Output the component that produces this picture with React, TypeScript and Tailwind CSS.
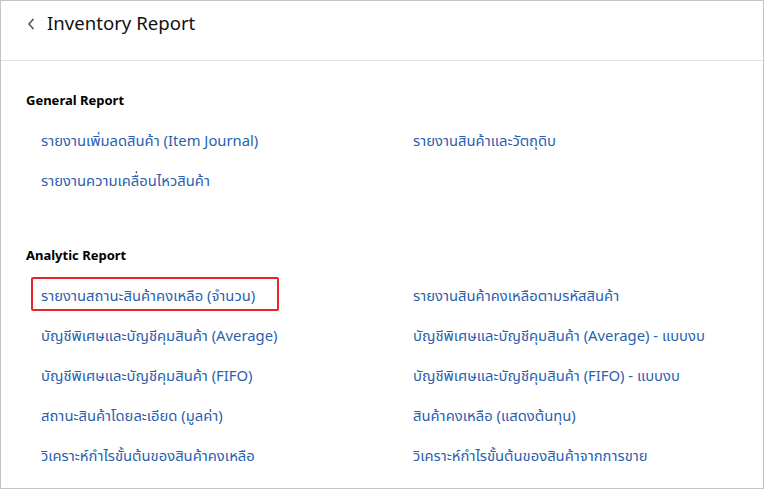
import React from "react";

const general: [string, string][] = [
  ["รายงานเพิ่มลดสินค้า (Item Journal)", "รายงานสินค้าและวัตถุดิบ"],
  ["รายงานความเคลื่อนไหวสินค้า", ""],
];

const analytic: [string, string][] = [
  ["รายงานสถานะสินค้าคงเหลือ (จำนวน)", "รายงานสินค้าคงเหลือตามรหัสสินค้า"],
  ["บัญชีพิเศษและบัญชีคุมสินค้า (Average)", "บัญชีพิเศษและบัญชีคุมสินค้า (Average) - แบบงบ"],
  ["บัญชีพิเศษและบัญชีคุมสินค้า (FIFO)", "บัญชีพิเศษและบัญชีคุมสินค้า (FIFO) - แบบงบ"],
  ["สถานะสินค้าโดยละเอียด (มูลค่า)", "สินค้าคงเหลือ (แสดงต้นทุน)"],
  ["วิเคราะห์กำไรขั้นต้นของสินค้าคงเหลือ", "วิเคราะห์กำไรขั้นต้นของสินค้าจากการขาย"],
];

function Link({ text, boxed }: { text: string; boxed?: boolean }) {
  if (!text) return <div />;
  return (
    <div className="relative h-[40px] flex items-center">
      <span className="text-[14.8px] text-[#2a5fae] leading-none">{text}</span>
      {boxed && (
        <span className="absolute left-[-10px] top-[2px] w-[248px] h-[34px] border-2 border-[#e8232a] rounded-[2px]" />
      )}
    </div>
  );
}

export default function App() {
  return (
    <div
      className="w-[765px] h-[490px] bg-white"
      style={{ fontFamily: '"Noto Sans", "Noto Sans Thai", "Leelawadee UI", sans-serif' }}
    >
      <div className="w-[764px] h-[489px] border border-[#c4c4c4] flex flex-col">
        <div className="h-[60px] flex items-start pt-[13px] pl-[26px] border-b border-[#e2e2e2]">
          <svg width="10" height="14" viewBox="0 0 10 14" className="mr-[10px] mt-[3px]">
            <path d="M6.5 2 L2 7 L6.5 12" fill="none" stroke="#555" strokeWidth="1.6" />
          </svg>
          <span className="text-[18.6px] text-[#111] leading-none">Inventory Report</span>
        </div>
        <div className="pl-[25px] pt-[30px]">
          <div className="text-[13px] font-bold text-black h-[20px] flex items-center">General Report</div>
          <div className="mt-[9px] pl-[15px] grid grid-cols-[372px_1fr]">
            {general.map(([a, b], i) => (
              <React.Fragment key={i}>
                <Link text={a} />
                <Link text={b} />
              </React.Fragment>
            ))}
          </div>
          <div className="mt-[46px] text-[13px] font-bold text-black h-[20px] flex items-center">Analytic Report</div>
          <div className="mt-[9px] pl-[15px] grid grid-cols-[372px_1fr]">
            {analytic.map(([a, b], i) => (
              <React.Fragment key={i}>
                <Link text={a} boxed={i === 0} />
                <Link text={b} />
              </React.Fragment>
            ))}
          </div>
        </div>
      </div>
    </div>
  );
}
